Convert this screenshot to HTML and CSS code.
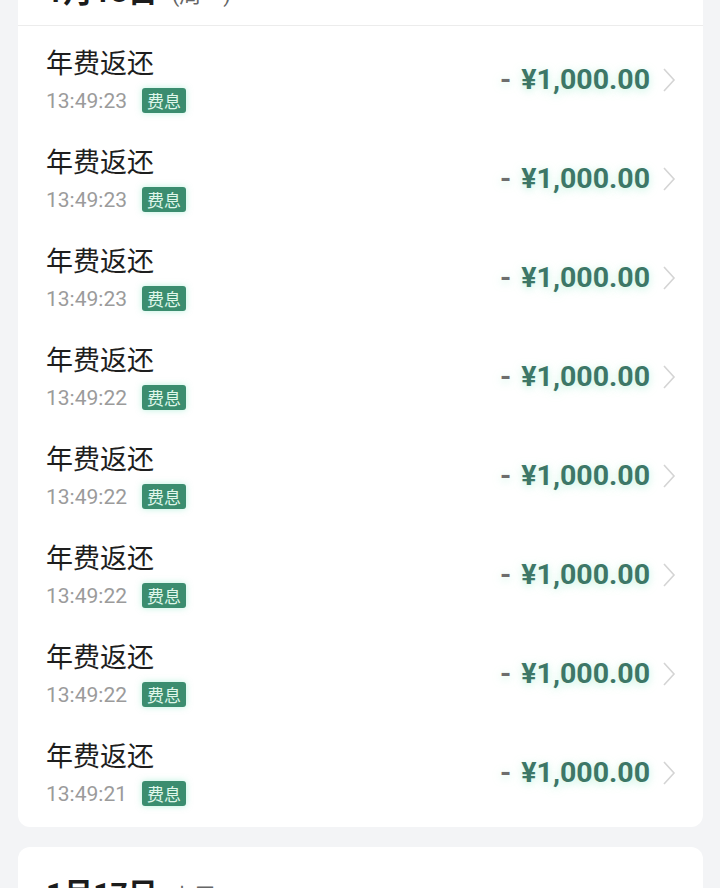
FILE: index.html
```html
<!DOCTYPE html>
<html lang="zh-CN">
<head>
    <meta charset="UTF-8">
    <meta name="viewport" content="width=device-width, initial-scale=1.0">
    <title>账单明细</title>
    <link rel="stylesheet" href="styles.css">
</head>
<body>
    <div class="page">
        <div class="card card-top">
            <div class="day-header">
                <span class="day-title">1月18日</span>
                <span class="day-sub">(周一)</span>
            </div>
            <div class="row">
                <div class="row-info">
                    <p class="row-title">年费返还</p>
                    <p class="row-meta"><span class="time">13:49:23</span><span class="tag">费息</span></p>
                </div>
                <div class="row-amount"><span class="minus">-</span> ¥1,000.00</div>
                <svg class="chevron" width="14" height="26" viewBox="0 0 14 26"><polyline points="2,2 12,13 2,24" fill="none" stroke="#d4d4d4" stroke-width="1.6"/></svg>
            </div>
            <div class="row">
                <div class="row-info">
                    <p class="row-title">年费返还</p>
                    <p class="row-meta"><span class="time">13:49:23</span><span class="tag">费息</span></p>
                </div>
                <div class="row-amount"><span class="minus">-</span> ¥1,000.00</div>
                <svg class="chevron" width="14" height="26" viewBox="0 0 14 26"><polyline points="2,2 12,13 2,24" fill="none" stroke="#d4d4d4" stroke-width="1.6"/></svg>
            </div>
            <div class="row">
                <div class="row-info">
                    <p class="row-title">年费返还</p>
                    <p class="row-meta"><span class="time">13:49:23</span><span class="tag">费息</span></p>
                </div>
                <div class="row-amount"><span class="minus">-</span> ¥1,000.00</div>
                <svg class="chevron" width="14" height="26" viewBox="0 0 14 26"><polyline points="2,2 12,13 2,24" fill="none" stroke="#d4d4d4" stroke-width="1.6"/></svg>
            </div>
            <div class="row">
                <div class="row-info">
                    <p class="row-title">年费返还</p>
                    <p class="row-meta"><span class="time">13:49:22</span><span class="tag">费息</span></p>
                </div>
                <div class="row-amount"><span class="minus">-</span> ¥1,000.00</div>
                <svg class="chevron" width="14" height="26" viewBox="0 0 14 26"><polyline points="2,2 12,13 2,24" fill="none" stroke="#d4d4d4" stroke-width="1.6"/></svg>
            </div>
            <div class="row">
                <div class="row-info">
                    <p class="row-title">年费返还</p>
                    <p class="row-meta"><span class="time">13:49:22</span><span class="tag">费息</span></p>
                </div>
                <div class="row-amount"><span class="minus">-</span> ¥1,000.00</div>
                <svg class="chevron" width="14" height="26" viewBox="0 0 14 26"><polyline points="2,2 12,13 2,24" fill="none" stroke="#d4d4d4" stroke-width="1.6"/></svg>
            </div>
            <div class="row">
                <div class="row-info">
                    <p class="row-title">年费返还</p>
                    <p class="row-meta"><span class="time">13:49:22</span><span class="tag">费息</span></p>
                </div>
                <div class="row-amount"><span class="minus">-</span> ¥1,000.00</div>
                <svg class="chevron" width="14" height="26" viewBox="0 0 14 26"><polyline points="2,2 12,13 2,24" fill="none" stroke="#d4d4d4" stroke-width="1.6"/></svg>
            </div>
            <div class="row">
                <div class="row-info">
                    <p class="row-title">年费返还</p>
                    <p class="row-meta"><span class="time">13:49:22</span><span class="tag">费息</span></p>
                </div>
                <div class="row-amount"><span class="minus">-</span> ¥1,000.00</div>
                <svg class="chevron" width="14" height="26" viewBox="0 0 14 26"><polyline points="2,2 12,13 2,24" fill="none" stroke="#d4d4d4" stroke-width="1.6"/></svg>
            </div>
            <div class="row">
                <div class="row-info">
                    <p class="row-title">年费返还</p>
                    <p class="row-meta"><span class="time">13:49:21</span><span class="tag">费息</span></p>
                </div>
                <div class="row-amount"><span class="minus">-</span> ¥1,000.00</div>
                <svg class="chevron" width="14" height="26" viewBox="0 0 14 26"><polyline points="2,2 12,13 2,24" fill="none" stroke="#d4d4d4" stroke-width="1.6"/></svg>
            </div>
        </div>

        <div class="card">
            <div class="day-header">
                <span class="day-title">1月17日</span>
                <span class="day-sub">上周</span>
            </div>
        </div>
    </div>
</body>
</html>
```

FILE: styles.css
```css
body {
    margin: 0;
    background: #f3f4f6;
    font-family: Roboto, "Noto Sans CJK SC", sans-serif;
    color: #222;
    overflow: hidden;
}
.page {
    display: flex;
    flex-direction: column;
    gap: 20px;
    padding: 0 17px 0 18px;
    margin-top: -44px;
}
.card {
    background: #fff;
    border-radius: 12px;
    padding-bottom: 9px;
}
.day-header {
    display: flex;
    align-items: baseline;
    gap: 14px;
    height: 70px;
    padding: 0 28px;
    box-sizing: border-box;
    padding-top: 22px;
    border-bottom: 1px solid #ececec;
}
.card-top .day-header {
    padding-top: 11px;
}
.day-title {
    font-size: 30px;
    font-weight: bold;
    color: #1c1c1c;
}
.day-sub {
    font-size: 22px;
    color: #666;
}
.row {
    display: flex;
    align-items: center;
    height: 99px;
    padding: 0 27px 0 28px;
}
.row-info {
    flex: 1;
    padding-top: 9px;
}
.row-title {
    margin: 0;
    font-size: 27px;
    line-height: 32px;
    color: #1e1e1e;
    font-family: "Noto Sans CJK SC", sans-serif;
}
.row-meta {
    margin: 9px 0 0;
    display: flex;
    align-items: center;
    gap: 15px;
    height: 28px;
}
.time {
    font-size: 21px;
    color: #9b9b9b;
}
.tag {
    background: #3b8d6f;
    color: #dff7ea;
    font-family: "Noto Sans CJK SC", sans-serif;
    font-size: 17px;
    line-height: 25px;
    padding: 0 5px;
    border-radius: 3px;
    box-shadow: 0 0 6px rgba(120, 230, 190, 0.5);
}
.row-amount {
    font-size: 28.5px;
    font-weight: bold;
    color: #3d7767;
    margin-top: 8px;
    text-shadow: 0 2px 8px rgba(150, 235, 200, 0.6);
}
.minus {
    color: #6d6d6d;
    margin-right: 3px;
}
.chevron {
    margin-left: 12px;
    margin-top: 8px;
}
```
